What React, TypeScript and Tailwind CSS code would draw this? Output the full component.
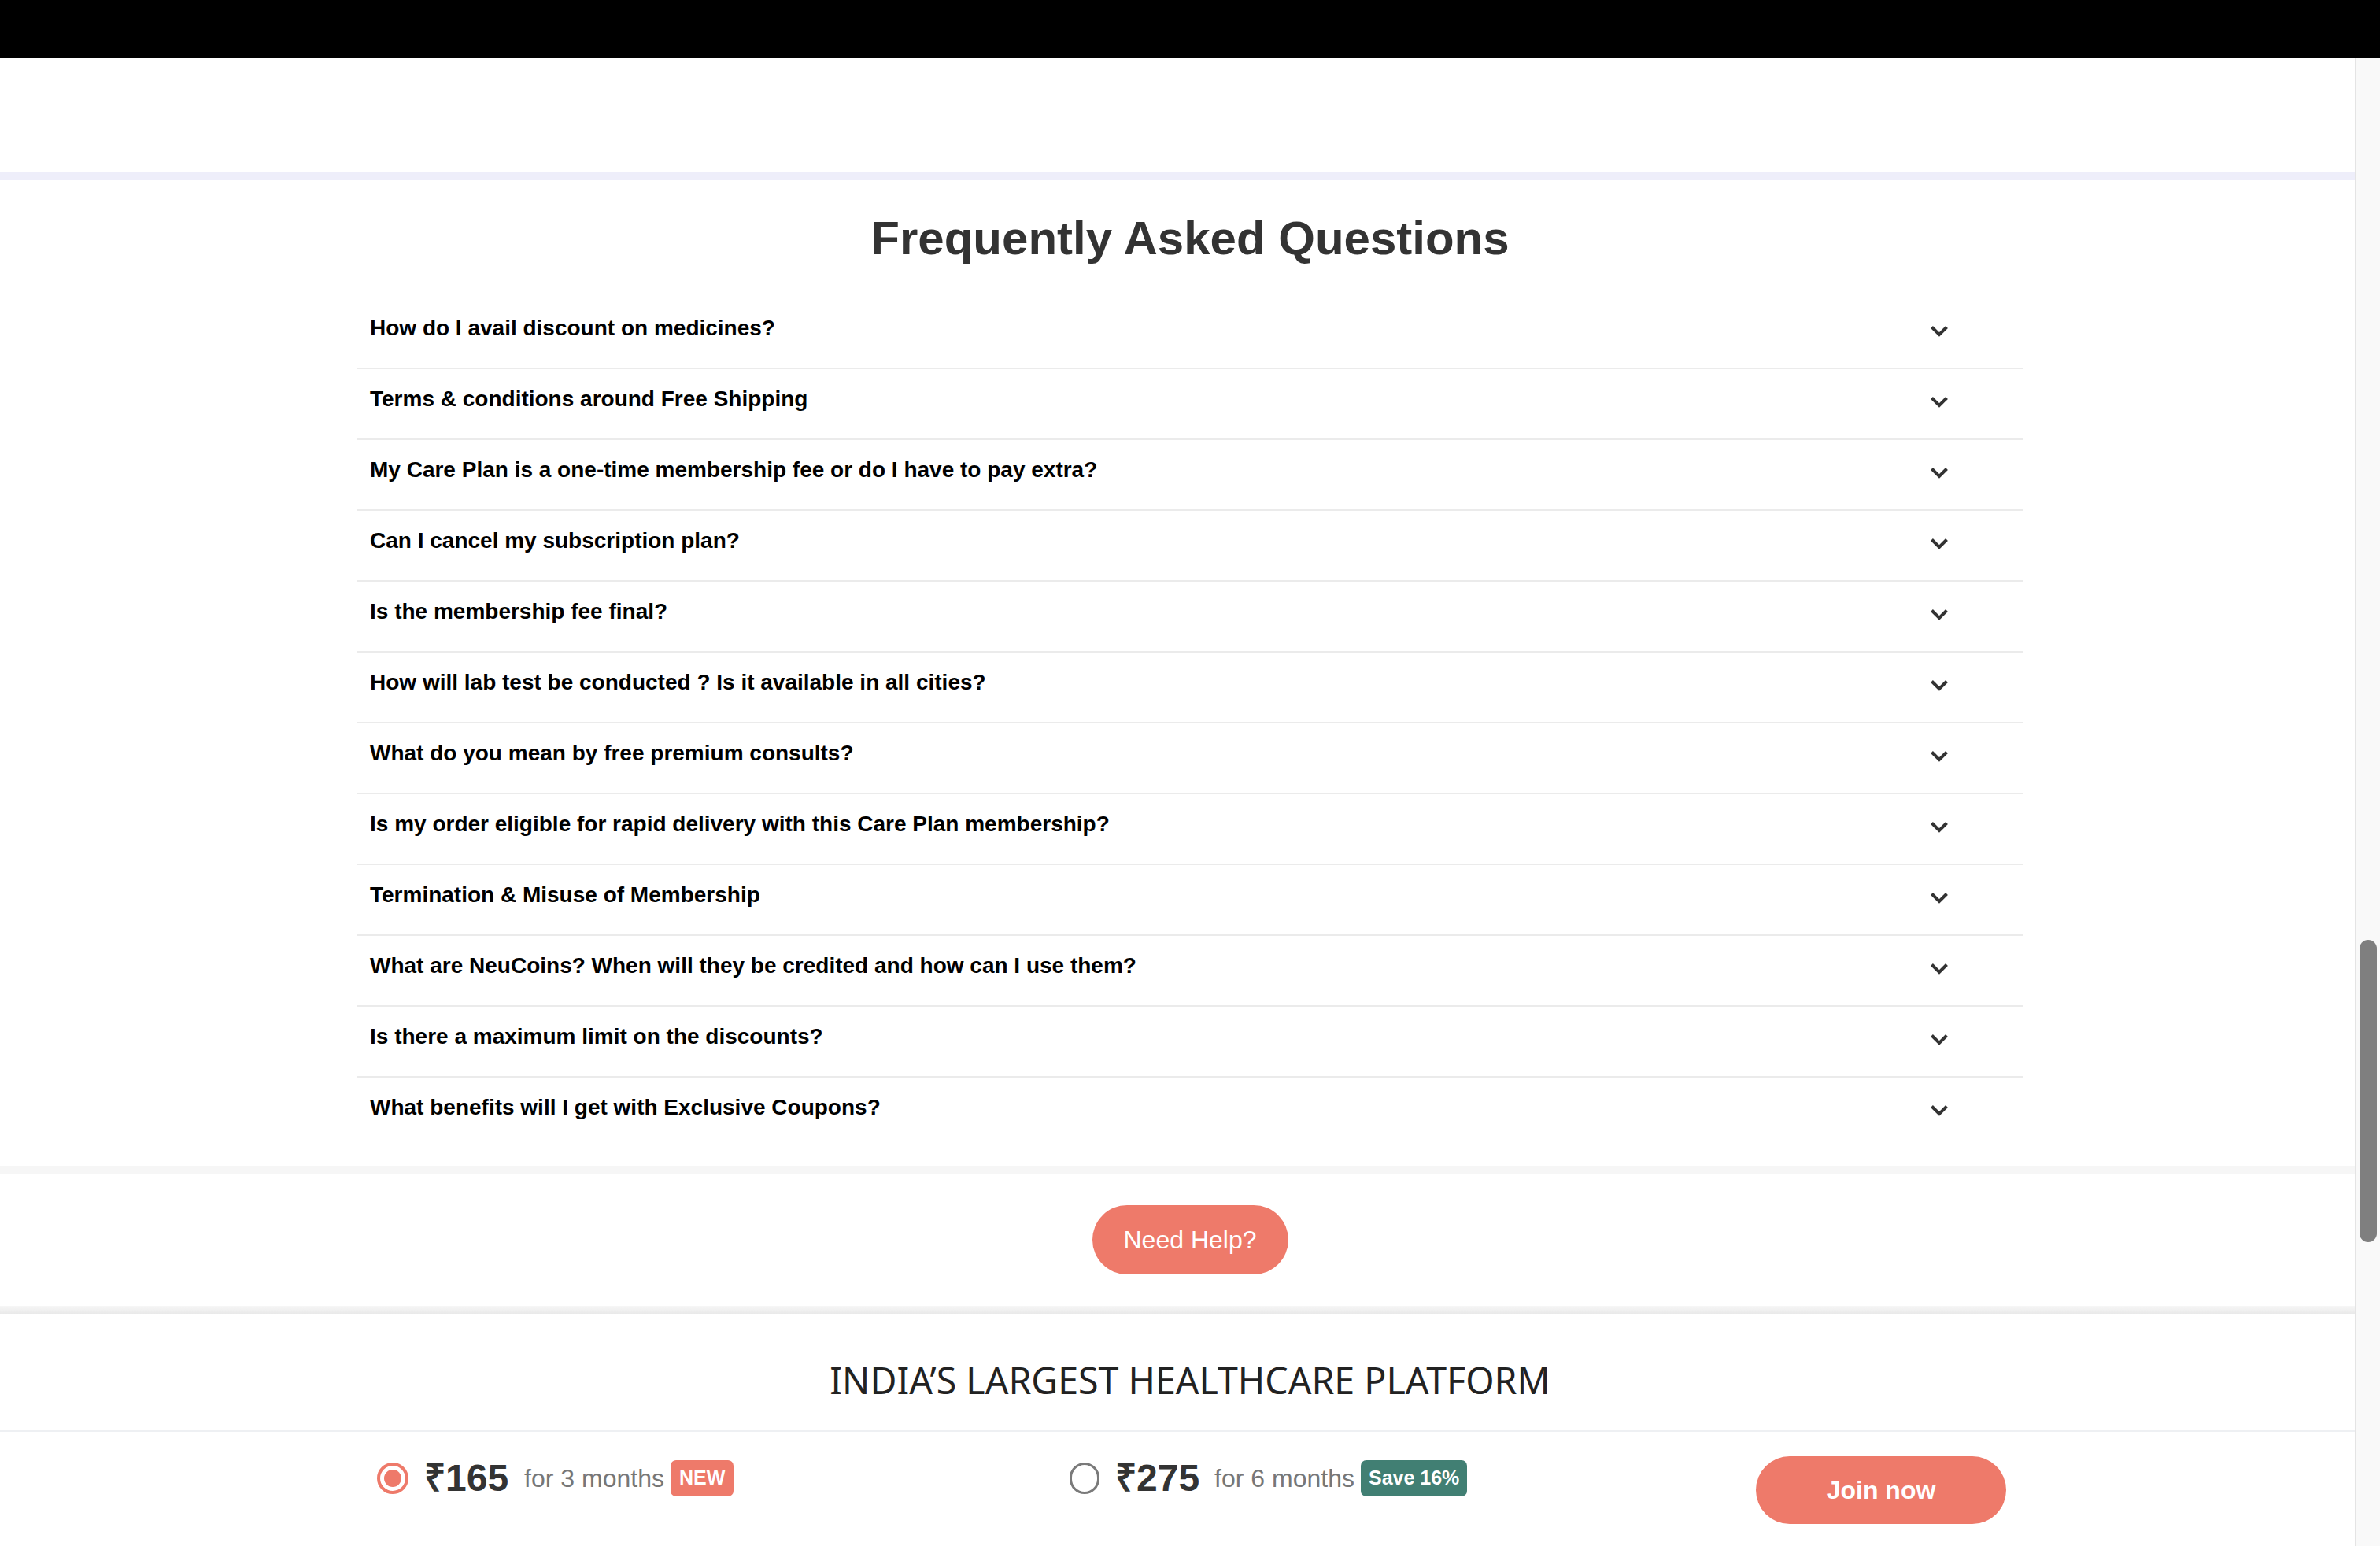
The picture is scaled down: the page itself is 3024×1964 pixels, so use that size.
import React from "react";

const questions = [
  "How do I avail discount on medicines?",
  "Terms & conditions around Free Shipping",
  "My Care Plan is a one-time membership fee or do I have to pay extra?",
  "Can I cancel my subscription plan?",
  "Is the membership fee final?",
  "How will lab test be conducted ? Is it available in all cities?",
  "What do you mean by free premium consults?",
  "Is my order eligible for rapid delivery with this Care Plan membership?",
  "Termination & Misuse of Membership",
  "What are NeuCoins? When will they be credited and how can I use them?",
  "Is there a maximum limit on the discounts?",
  "What benefits will I get with Exclusive Coupons?",
];

function Chevron() {
  return (
    <svg width="24" height="16" viewBox="0 0 24 16" className="block">
      <path d="M2.5 2.5 L12 12 L21.5 2.5" fill="none" stroke="#333333" strokeWidth="4" strokeLinejoin="miter" />
    </svg>
  );
}

export default function App() {
  return (
    <div
      className="relative w-[3024px] h-[1964px] overflow-hidden bg-white"
      style={{ fontFamily: '"Liberation Sans", Arial, sans-serif' }}
    >
      <div className="h-[74px] bg-black" />
      <div className="h-[145px] bg-white" />
      <div className="h-[10px] bg-[#eeeefa]" />

      {/* FAQ */}
      <section className="pt-[39px] pb-[24px] bg-white">
        <h2 className="text-center text-[60px] leading-[69px] font-bold text-[#333333]">
          Frequently Asked Questions
        </h2>
        <div className="mx-auto w-[2116px] mt-[42px]">
          {questions.map((q, i) => (
            <div
              key={i}
              className={
                "flex items-start justify-between pl-[16px] pr-[94px] pt-[22px] pb-[34px] " +
                (i < questions.length - 1 ? "border-b-2 border-[#ebebeb]" : "")
              }
            >
              <span className="text-[28px] leading-[32px] font-bold text-[#000000]">{q}</span>
              <span className="mt-[12px]">
                <Chevron />
              </span>
            </div>
          ))}
        </div>
      </section>

      <div className="h-[10px] bg-[#f6f6f6]" />

      {/* Need help */}
      <section className="flex justify-center pt-[40px] pb-[40px] bg-white">
        <button className="w-[249px] h-[88px] rounded-full bg-[#ee7a6a] text-white text-[32px] font-normal">
          Need Help?
        </button>
      </section>

      <div className="h-[10px] bg-gradient-to-b from-[#f7f7f7] to-[#e9e9e9]" />

      {/* Bottom */}
      <section className="bg-white">
        <div
          className="pt-[56px] pb-[36px] text-center text-[46.5px] leading-[56px] text-[#222222]"
          style={{ fontFamily: '"Noto Sans", sans-serif' }}
        >
          INDIA’S LARGEST HEALTHCARE PLATFORM
        </div>
        <div className="h-[2px] bg-[#eef0f3]" />
        <div className="mx-auto w-[2116px] flex items-start pl-[25px] pr-[21px] pt-[31px]">
          <div className="w-[880px] flex items-center mt-[5px] h-[46px]">
            <span className="w-[40px] h-[40px] rounded-full border-[4px] border-[#ee7a6a] flex items-center justify-center">
              <span className="w-[22px] h-[22px] rounded-full bg-[#ee7a6a]" />
            </span>
            <span className="ml-[20px] text-[48px] font-bold text-[#333333] leading-none">₹165</span>
            <span className="ml-[20px] text-[32px] text-[#777777] leading-none">for 3 months</span>
            <span className="ml-[8px] h-[46px] px-[11px] rounded-[7px] bg-[#ee7a6a] text-white text-[25px] font-bold flex items-center">
              NEW
            </span>
          </div>
          <div className="flex-1 flex items-center mt-[5px] h-[46px]">
            <span className="w-[38px] h-[40px] rounded-full border-[3px] border-[#7a7a7a]" />
            <span className="ml-[20px] text-[48px] font-bold text-[#333333] leading-none">₹275</span>
            <span className="ml-[19px] text-[32px] text-[#777777] leading-none">for 6 months</span>
            <span className="ml-[8px] h-[46px] px-[10px] rounded-[7px] bg-[#417f73] text-white text-[25px] font-bold flex items-center">
              Save 16%
            </span>
          </div>
          <button className="w-[318px] h-[86px] rounded-full bg-[#ee7a6a] text-white text-[32px] font-bold">
            Join now
          </button>
        </div>
      </section>

      {/* Scrollbar overlay */}
      <div className="absolute right-0 top-[74px] bottom-0 w-[32px] bg-[#f9f9f9] border-l border-[#e4e4e4]">
        <div className="absolute left-[5px] top-[1120px] w-[22px] h-[384px] rounded-full bg-[#7f7f7f]" />
      </div>
    </div>
  );
}
